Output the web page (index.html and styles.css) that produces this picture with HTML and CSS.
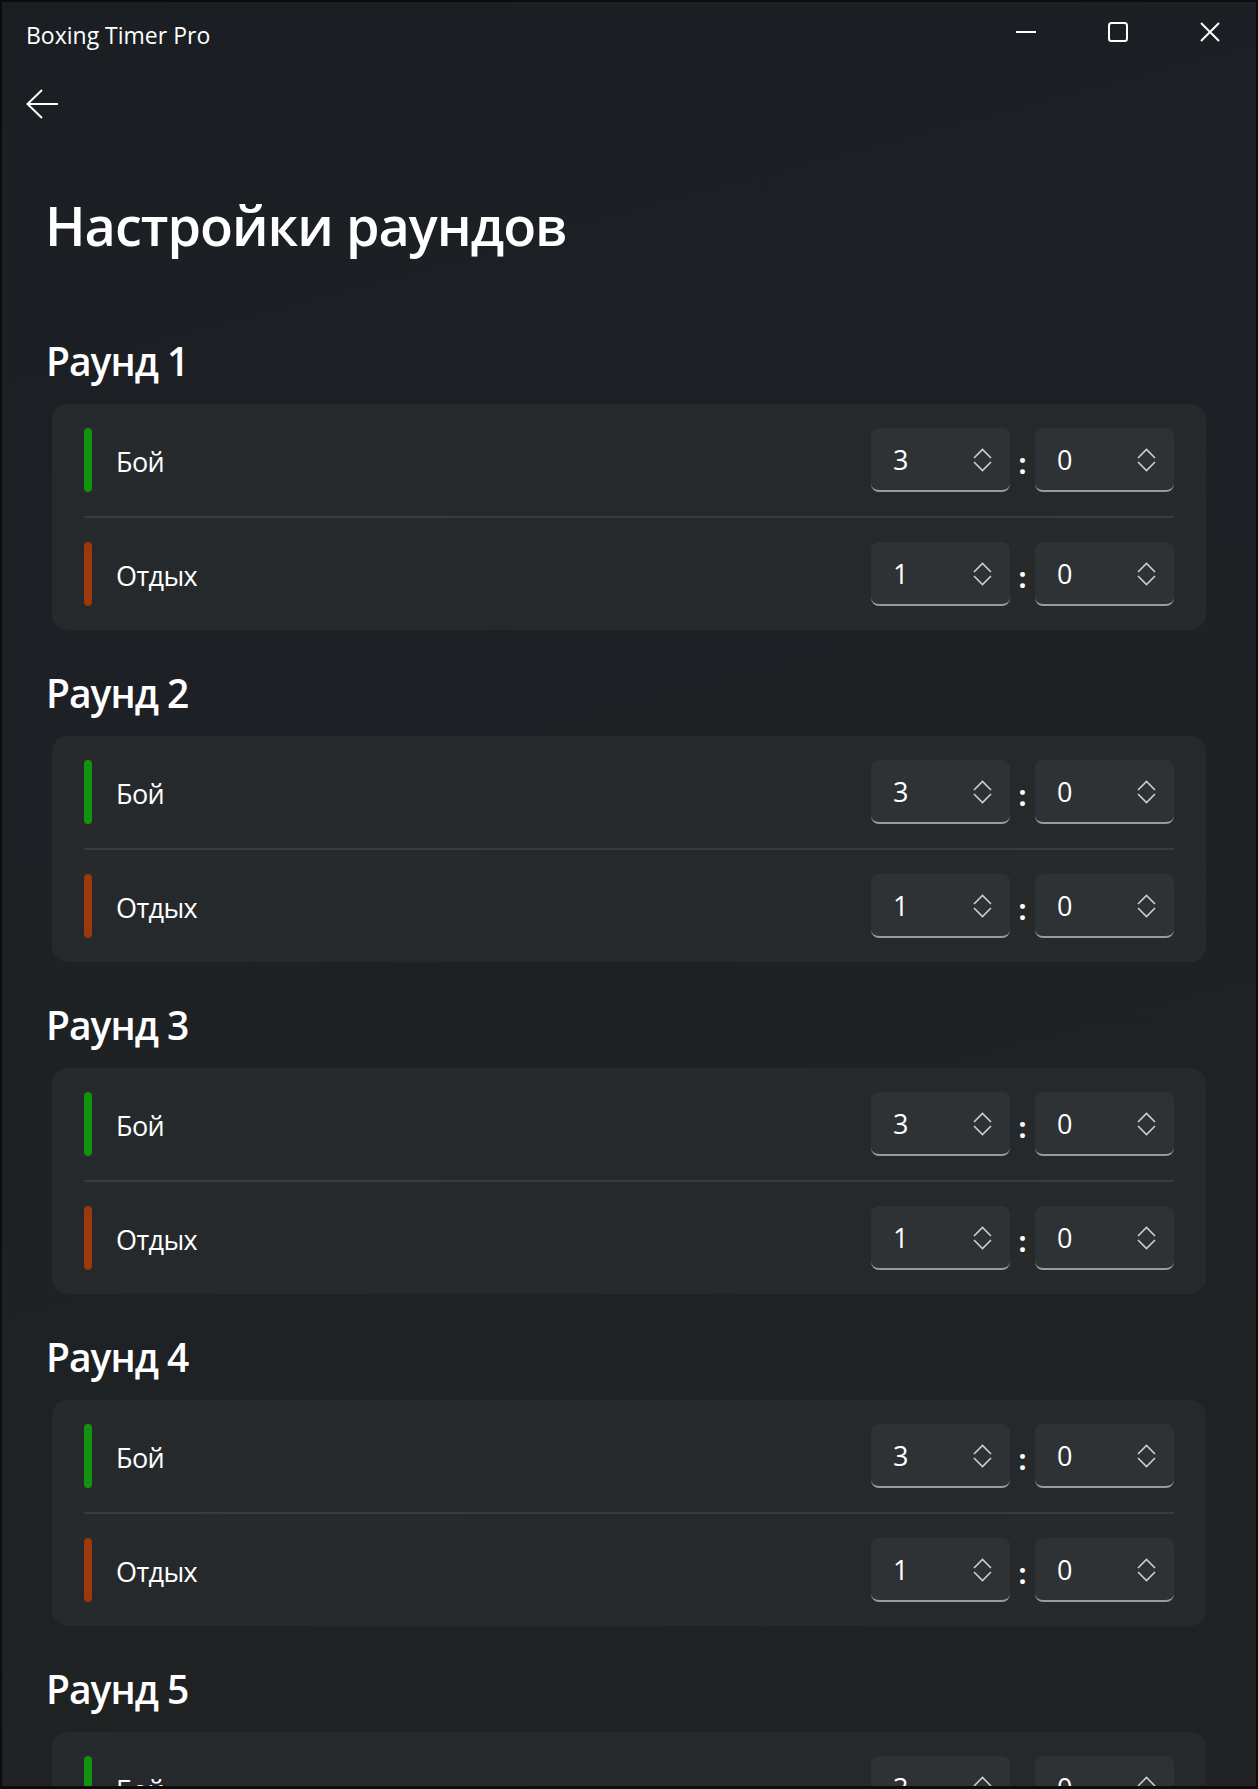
FILE: index.html
```html
<!DOCTYPE html>
<html lang="ru">
<head>
<meta charset="utf-8">
<title>Boxing Timer Pro</title>
<link rel="stylesheet" href="styles.css">
</head>
<body>
<div class="window">
  <header class="titlebar">
    <span class="app-title">Boxing Timer Pro</span>
    <div class="caption-buttons">
      <button class="caption-btn" aria-label="Свернуть">
        <svg width="20" height="20" viewBox="0 0 20 20"><path d="M0 10 H20" /></svg>
      </button>
      <button class="caption-btn" aria-label="Развернуть">
        <svg width="20" height="20" viewBox="0 0 20 20"><rect x="1" y="1" width="18" height="18" rx="2.5" /></svg>
      </button>
      <button class="caption-btn" aria-label="Закрыть">
        <svg width="20" height="20" viewBox="0 0 20 20"><path d="M1 1 L19 19 M19 1 L1 19" /></svg>
      </button>
    </div>
  </header>

  <nav class="nav">
    <button class="back-btn" aria-label="Назад">
      <svg width="32" height="30" viewBox="0 0 32 30"><path d="M16 1 L1.5 15 L16 29 M1.5 15 H32" /></svg>
    </button>
  </nav>

  <main class="content">
    <h1 class="page-title">Настройки раундов</h1>

    <section class="round">
      <h2 class="round-title">Раунд 1</h2>
      <div class="card">
        <div class="row">
          <span class="bar bar-fight"></span>
          <span class="label">Бой</span>
          <div class="time">
            <div class="numbox"><span class="num">3</span><svg class="spin" width="19" height="24" viewBox="0 0 19 24"><path d="M1 10 L9.5 1.5 L18 10 M1 14 L9.5 22.5 L18 14" /></svg></div>
            <span class="colon">:</span>
            <div class="numbox"><span class="num">0</span><svg class="spin" width="19" height="24" viewBox="0 0 19 24"><path d="M1 10 L9.5 1.5 L18 10 M1 14 L9.5 22.5 L18 14" /></svg></div>
          </div>
        </div>
        <div class="divider"></div>
        <div class="row">
          <span class="bar bar-rest"></span>
          <span class="label">Отдых</span>
          <div class="time">
            <div class="numbox"><span class="num">1</span><svg class="spin" width="19" height="24" viewBox="0 0 19 24"><path d="M1 10 L9.5 1.5 L18 10 M1 14 L9.5 22.5 L18 14" /></svg></div>
            <span class="colon">:</span>
            <div class="numbox"><span class="num">0</span><svg class="spin" width="19" height="24" viewBox="0 0 19 24"><path d="M1 10 L9.5 1.5 L18 10 M1 14 L9.5 22.5 L18 14" /></svg></div>
          </div>
        </div>
      </div>
    </section>

    <section class="round">
      <h2 class="round-title">Раунд 2</h2>
      <div class="card">
        <div class="row">
          <span class="bar bar-fight"></span>
          <span class="label">Бой</span>
          <div class="time">
            <div class="numbox"><span class="num">3</span><svg class="spin" width="19" height="24" viewBox="0 0 19 24"><path d="M1 10 L9.5 1.5 L18 10 M1 14 L9.5 22.5 L18 14" /></svg></div>
            <span class="colon">:</span>
            <div class="numbox"><span class="num">0</span><svg class="spin" width="19" height="24" viewBox="0 0 19 24"><path d="M1 10 L9.5 1.5 L18 10 M1 14 L9.5 22.5 L18 14" /></svg></div>
          </div>
        </div>
        <div class="divider"></div>
        <div class="row">
          <span class="bar bar-rest"></span>
          <span class="label">Отдых</span>
          <div class="time">
            <div class="numbox"><span class="num">1</span><svg class="spin" width="19" height="24" viewBox="0 0 19 24"><path d="M1 10 L9.5 1.5 L18 10 M1 14 L9.5 22.5 L18 14" /></svg></div>
            <span class="colon">:</span>
            <div class="numbox"><span class="num">0</span><svg class="spin" width="19" height="24" viewBox="0 0 19 24"><path d="M1 10 L9.5 1.5 L18 10 M1 14 L9.5 22.5 L18 14" /></svg></div>
          </div>
        </div>
      </div>
    </section>

    <section class="round">
      <h2 class="round-title">Раунд 3</h2>
      <div class="card">
        <div class="row">
          <span class="bar bar-fight"></span>
          <span class="label">Бой</span>
          <div class="time">
            <div class="numbox"><span class="num">3</span><svg class="spin" width="19" height="24" viewBox="0 0 19 24"><path d="M1 10 L9.5 1.5 L18 10 M1 14 L9.5 22.5 L18 14" /></svg></div>
            <span class="colon">:</span>
            <div class="numbox"><span class="num">0</span><svg class="spin" width="19" height="24" viewBox="0 0 19 24"><path d="M1 10 L9.5 1.5 L18 10 M1 14 L9.5 22.5 L18 14" /></svg></div>
          </div>
        </div>
        <div class="divider"></div>
        <div class="row">
          <span class="bar bar-rest"></span>
          <span class="label">Отдых</span>
          <div class="time">
            <div class="numbox"><span class="num">1</span><svg class="spin" width="19" height="24" viewBox="0 0 19 24"><path d="M1 10 L9.5 1.5 L18 10 M1 14 L9.5 22.5 L18 14" /></svg></div>
            <span class="colon">:</span>
            <div class="numbox"><span class="num">0</span><svg class="spin" width="19" height="24" viewBox="0 0 19 24"><path d="M1 10 L9.5 1.5 L18 10 M1 14 L9.5 22.5 L18 14" /></svg></div>
          </div>
        </div>
      </div>
    </section>

    <section class="round">
      <h2 class="round-title">Раунд 4</h2>
      <div class="card">
        <div class="row">
          <span class="bar bar-fight"></span>
          <span class="label">Бой</span>
          <div class="time">
            <div class="numbox"><span class="num">3</span><svg class="spin" width="19" height="24" viewBox="0 0 19 24"><path d="M1 10 L9.5 1.5 L18 10 M1 14 L9.5 22.5 L18 14" /></svg></div>
            <span class="colon">:</span>
            <div class="numbox"><span class="num">0</span><svg class="spin" width="19" height="24" viewBox="0 0 19 24"><path d="M1 10 L9.5 1.5 L18 10 M1 14 L9.5 22.5 L18 14" /></svg></div>
          </div>
        </div>
        <div class="divider"></div>
        <div class="row">
          <span class="bar bar-rest"></span>
          <span class="label">Отдых</span>
          <div class="time">
            <div class="numbox"><span class="num">1</span><svg class="spin" width="19" height="24" viewBox="0 0 19 24"><path d="M1 10 L9.5 1.5 L18 10 M1 14 L9.5 22.5 L18 14" /></svg></div>
            <span class="colon">:</span>
            <div class="numbox"><span class="num">0</span><svg class="spin" width="19" height="24" viewBox="0 0 19 24"><path d="M1 10 L9.5 1.5 L18 10 M1 14 L9.5 22.5 L18 14" /></svg></div>
          </div>
        </div>
      </div>
    </section>

    <section class="round">
      <h2 class="round-title">Раунд 5</h2>
      <div class="card">
        <div class="row">
          <span class="bar bar-fight"></span>
          <span class="label">Бой</span>
          <div class="time">
            <div class="numbox"><span class="num">3</span><svg class="spin" width="19" height="24" viewBox="0 0 19 24"><path d="M1 10 L9.5 1.5 L18 10 M1 14 L9.5 22.5 L18 14" /></svg></div>
            <span class="colon">:</span>
            <div class="numbox"><span class="num">0</span><svg class="spin" width="19" height="24" viewBox="0 0 19 24"><path d="M1 10 L9.5 1.5 L18 10 M1 14 L9.5 22.5 L18 14" /></svg></div>
          </div>
        </div>
        <div class="divider"></div>
        <div class="row">
          <span class="bar bar-rest"></span>
          <span class="label">Отдых</span>
          <div class="time">
            <div class="numbox"><span class="num">1</span><svg class="spin" width="19" height="24" viewBox="0 0 19 24"><path d="M1 10 L9.5 1.5 L18 10 M1 14 L9.5 22.5 L18 14" /></svg></div>
            <span class="colon">:</span>
            <div class="numbox"><span class="num">0</span><svg class="spin" width="19" height="24" viewBox="0 0 19 24"><path d="M1 10 L9.5 1.5 L18 10 M1 14 L9.5 22.5 L18 14" /></svg></div>
          </div>
        </div>
      </div>
    </section>
  </main>
</div>
</body>
</html>
```

FILE: styles.css
```css
* {
  box-sizing: border-box;
}

html, body {
  margin: 0;
  padding: 0;
  background: #0b0c0d;
}

body {
  font-family: "Open Sans", "Noto Sans", "Liberation Sans", sans-serif;
  color: #ffffff;
}

.window {
  width: 1258px;
  height: 1789px;
  overflow: hidden;
  border: 2px solid #0b0c0d;
  border-bottom-width: 3px;
  background: linear-gradient(165deg, #1b1f24 0%, #1d2125 35%, #1f2224 70%, #202223 100%);
  display: flex;
  flex-direction: column;
}

/* ---------- title bar ---------- */
.titlebar {
  height: 64px;
  flex: none;
  display: flex;
  justify-content: space-between;
  align-items: flex-start;
}

.app-title {
  padding: 18px 0 0 24px;
  font-size: 23px;
  line-height: 30px;
  color: #ffffff;
}

.caption-buttons {
  display: flex;
}

.caption-btn {
  width: 92px;
  height: 60px;
  border: 0;
  padding: 0;
  background: transparent;
  display: flex;
  align-items: center;
  justify-content: center;
}

.caption-btn svg {
  fill: none;
  stroke: #ffffff;
  stroke-width: 2;
}

/* ---------- back navigation ---------- */
.nav {
  flex: none;
  padding: 23px 0 0 24px;
  display: flex;
}

.back-btn {
  border: 0;
  padding: 0;
  background: transparent;
  width: 32px;
  height: 30px;
  display: block;
}

.back-btn svg {
  display: block;
  fill: none;
  stroke: #ffffff;
  stroke-width: 2;
}

/* ---------- content ---------- */
.content {
  display: flex;
  flex-direction: column;
  padding: 0 50px 0 45px;
}

.page-title {
  margin: 70px 0 37px -2px;
  font-size: 54px;
  line-height: 72px;
  font-weight: 600;
  letter-spacing: -1px;
}

.round {
  display: flex;
  flex-direction: column;
  flex: none;
}

.round-title {
  margin: 35px 0 15px -1px;
  font-size: 39px;
  line-height: 56px;
  font-weight: 600;
  letter-spacing: -1px;
}

.card {
  margin-left: 5px;
  background: linear-gradient(160deg, #272a2c 0%, #26292b 60%, #27292a 100%);
  border-radius: 16px;
  padding: 24px 32px;
}

.row {
  height: 64px;
  display: flex;
  align-items: center;
}

.bar {
  width: 8px;
  height: 64px;
  border-radius: 4px;
  flex: none;
}

.bar-fight {
  background: #12920f;
}

.bar-rest {
  background: #9b380c;
}

.label {
  flex: 1;
  margin-left: 24px;
  padding-top: 3px;
  font-size: 27px;
  line-height: 40px;
  letter-spacing: -0.6px;
  color: #ffffff;
}

.divider {
  height: 2px;
  margin: 24px 0;
  background: #393c3e;
}

.time {
  display: flex;
  align-items: center;
}

.numbox {
  width: 139px;
  height: 64px;
  background: #2f3234;
  border-radius: 8px;
  border-bottom: 2px solid #9a9b9c;
  display: flex;
  align-items: center;
  justify-content: space-between;
  padding: 2px 18px 0 22px;
}

.num {
  font-size: 27px;
  line-height: 40px;
  color: #ffffff;
}

.spin {
  display: block;
  fill: none;
  stroke: #cdcdcd;
  stroke-width: 1.6;
}

.colon {
  width: 25px;
  text-align: center;
  font-size: 28px;
  font-weight: 700;
  line-height: 40px;
  padding-top: 5px;
  color: #ffffff;
}
```
